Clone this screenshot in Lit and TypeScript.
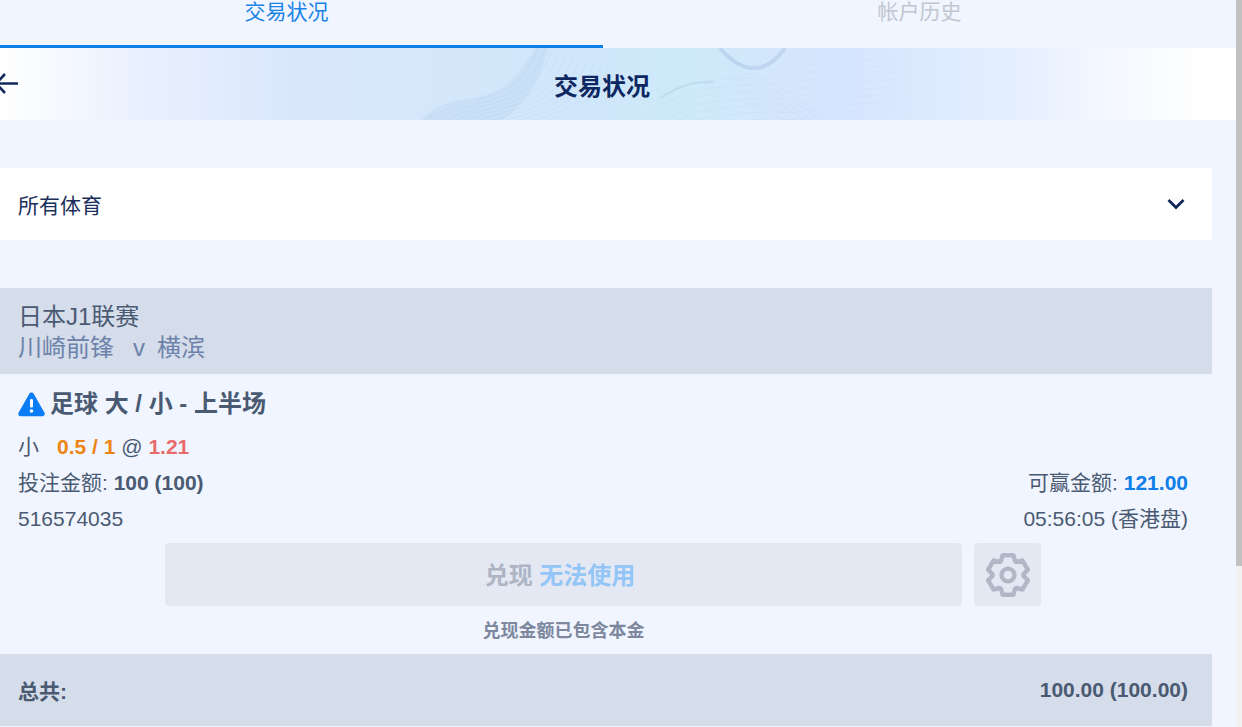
import { LitElement, html, css, svg } from "lit";
import { customElement } from "lit/decorators.js";

function gearPath(cx: number, cy: number, R: number, r: number): string {
  const pt = (rad: number, deg: number) => {
    const a = (deg * Math.PI) / 180;
    return `${(cx + rad * Math.cos(a)).toFixed(2)} ${(cy + rad * Math.sin(a)).toFixed(2)}`;
  };
  const parts: string[] = [];
  for (let k = 0; k < 6; k++) {
    const a = -90 + 60 * k;
    parts.push(`${k === 0 ? "M" : "L"}${pt(r, a - 27)}`, `L${pt(R, a - 15)}`, `L${pt(R, a + 15)}`, `L${pt(r, a + 27)}`);
  }
  return parts.join(" ") + " Z";
}

const contourSets = [
  { base: "M420 122 C450 104 480 102 505 90 C522 80 530 66 538 48", dx: 7, dy: 2, n: 11, color: "#9cc0e4" },
  { base: "M640 122 C660 100 672 88 690 84 C705 80 720 80 740 78 C760 76 770 80 800 100 L830 122", dx: 2, dy: 7, n: 7, color: "#a8c8ea" },
  { base: "M720 48 C735 70 765 74 790 68 C820 62 850 62 890 58", dx: 3, dy: 7, n: 8, color: "#b4cff0" },
];

@customElement("app-root")
export class AppRoot extends LitElement {
  static styles = css`
    :host {
      display: flex;
      width: 1242px;
      height: 727px;
      overflow: hidden;
      background: #f1f1f1;
      font-family: "Liberation Sans", "Noto Sans CJK SC", sans-serif;
      font-size: 21px;
      color: #4a5a72;
    }
    .view {
      width: 1236px;
      height: 727px;
      overflow: hidden;
      background: #f0f5ff;
      flex: none;
    }
    .page {
      width: 1266px;
      margin-left: -30px;
    }
    .scrollbar {
      flex: 1;
      height: 727px;
    }
    .thumb {
      height: 566px;
      background: #c1c1c1;
    }
    .tabs {
      display: flex;
      height: 48px;
    }
    .tab {
      flex: 1;
      text-align: center;
      line-height: 24px;
      color: #c2c6d0;
      box-sizing: border-box;
      border-bottom: 3px solid transparent;
    }
    .tab.active {
      color: #1a84e6;
      border-bottom-color: #0f80e8;
    }
    .banner {
      position: relative;
      height: 72px;
      display: flex;
      align-items: center;
      justify-content: center;
      overflow: hidden;
      background: linear-gradient(
        90deg,
        #ffffff 30px,
        #f6f9ff 90px,
        #eaf1fe 160px,
        #d9e7fb 330px,
        #d5e7fb 450px,
        #d0e6fa 620px,
        #cdeaf8 710px,
        #d5e6fd 820px,
        #d6e5fe 880px,
        #e5efff 1050px,
        #f3f7ff 1130px,
        #ffffff 1235px
      );
    }
    .decor {
      position: absolute;
      left: 0;
      top: 0;
    }
    .back {
      position: absolute;
      left: 24px;
      top: 22px;
    }
    .title {
      position: relative;
      font-size: 24px;
      font-weight: 700;
      color: #0d2762;
      line-height: 1;
      margin-top: 6px;
      left: -1px;
    }
    .content {
      padding: 48px 24px 0;
    }
    .select {
      height: 72px;
      background: #fff;
      border-radius: 4px;
      display: flex;
      align-items: center;
      justify-content: space-between;
      padding: 0 27px 0 24px;
      color: #1b2f5c;
    }
    .chevron {
      display: block;
    }
    .league {
      margin-top: 48px;
      background: #d5dcea;
      height: 86px;
      box-sizing: border-box;
      padding: 13px 24px 0;
      font-size: 24px;
      line-height: 31px;
    }
    .teams {
      color: #6c82ab;
      display: flex;
    }
    .vs {
      padding: 0 12px 0 19px;
    }
    .bet {
      height: 280px;
      box-sizing: border-box;
      padding: 12px 24px 0;
    }
    .market {
      display: flex;
      align-items: center;
      gap: 5px;
      font-size: 24px;
      font-weight: 700;
      line-height: 36px;
      margin-bottom: 7px;
    }
    .market svg {
      display: block;
    }
    .row {
      display: flex;
      justify-content: space-between;
      line-height: 36px;
    }
    .odds {
      margin-right: 18px;
    }
    b.orange {
      color: #ec8514;
    }
    b.red {
      color: #e96c6c;
    }
    b.blue {
      color: #0e7fe8;
    }
    .actions {
      display: grid;
      grid-template-columns: 797px 67px;
      justify-content: center;
      gap: 0 12px;
      margin-top: 6px;
    }
    .cash {
      height: 63px;
      box-sizing: border-box;
      padding: 0 7px 2px 0;
      background: #e4e8f3;
      border-radius: 4px;
      display: flex;
      align-items: center;
      justify-content: center;
      font-size: 24px;
      font-weight: 700;
      color: #adb4c4;
      white-space: pre;
    }
    .cash span {
      color: #93c5f7;
    }
    .gear {
      height: 63px;
      background: #e4e8f3;
      border-radius: 4px;
      display: flex;
      align-items: center;
      justify-content: center;
    }
    .note {
      text-align: center;
      font-size: 18px;
      font-weight: 700;
      color: #7d889e;
      margin-top: 12px;
      line-height: 26px;
    }
    .total {
      height: 72px;
      background: #d5dcea;
      display: flex;
      align-items: center;
      justify-content: space-between;
      padding: 0 24px;
      font-weight: 700;
    }
  `;

  private decor() {
    return html`<svg class="decor" width="1266" height="72" viewBox="0 48 1266 72" fill="none">
      <g transform="translate(30 0)">
        <path d="M420 122 C432 106 450 100 478 97 C505 92 522 72 535 48 L548 48 C540 84 525 104 500 122 Z" fill="#bcd6ef" opacity=".4"></path>
        <path d="M720 48 C730 60 742 68 754 68 C768 68 778 58 785 48" stroke="#b5cfe9" stroke-width="4" opacity=".7"></path>
        <path d="M660 98 C670 92 680 86 690 84 C698 82 706 82 714 82" stroke="#b7d2e9" stroke-width="2" opacity=".6"></path>
        ${contourSets.map((set) =>
          Array.from({ length: set.n }, (_, i) =>
            svg`<path d=${set.base} transform="translate(${i * set.dx} ${i * set.dy})" stroke=${set.color} stroke-width=".5" opacity=".28"></path>`
          )
        )}
      </g>
    </svg>`;
  }

  render() {
    return html`
      <div class="view">
        <div class="page">
          <div class="tabs">
            <div class="tab active">交易状况</div>
            <div class="tab">帐户历史</div>
          </div>
          <div class="banner">
            ${this.decor()}
            <svg class="back" width="26" height="28" viewBox="0 0 26 28" fill="none" stroke="#12285c" stroke-width="2.6">
              <path d="M24 13.5 H3 M11 4 L2 13.5 L11 23"></path>
            </svg>
            <div class="title">交易状况</div>
          </div>
          <div class="content">
            <div class="select">
              <span>所有体育</span>
              <svg class="chevron" width="18" height="12" viewBox="0 0 18 12" fill="none" stroke="#12285c" stroke-width="2.8">
                <path d="M1.5 2 L9 9.5 L16.5 2"></path>
              </svg>
            </div>
            <div class="league">
              <div>日本J1联赛</div>
              <div class="teams"><span>川崎前锋</span><span class="vs">v</span><span>横滨</span></div>
            </div>
            <div class="bet">
              <div class="market">
                <svg width="27" height="25" viewBox="0 0 27 25">
                  <path d="M13.5 3 L24.2 21.8 H2.8 Z" fill="#0a7cf5" stroke="#0a7cf5" stroke-width="5" stroke-linejoin="round"></path>
                  <rect x="12" y="7" width="3" height="8.5" rx="1.2" fill="#fff"></rect>
                  <circle cx="13.5" cy="19" r="1.8" fill="#fff"></circle>
                </svg>
                足球 大 / 小 - 上半场
              </div>
              <div class="row">
                <span><span class="odds">小</span><b class="orange">0.5 / 1</b> @ <b class="red">1.21</b></span>
              </div>
              <div class="row">
                <span>投注金额: <b>100 (100)</b></span>
                <span>可赢金额: <b class="blue">121.00</b></span>
              </div>
              <div class="row">
                <span>516574035</span>
                <span>05:56:05 (香港盘)</span>
              </div>
              <div class="actions">
                <div class="cash">兑现 <span>无法使用</span></div>
                <div class="gear">
                  <svg width="46" height="48" viewBox="0 0 46 48" fill="none" stroke="#b0b7c6" stroke-width="4.4" stroke-linejoin="round">
                    <path d=${gearPath(23, 24, 20.5, 15.5)}></path>
                    <circle cx="23" cy="24" r="6.4"></circle>
                  </svg>
                </div>
                <div class="note">兑现金额已包含本金</div>
              </div>
            </div>
            <div class="total">
              <span>总共:</span>
              <span>100.00 (100.00)</span>
            </div>
          </div>
        </div>
      </div>
      <div class="scrollbar"><div class="thumb"></div></div>
    `;
  }
}
